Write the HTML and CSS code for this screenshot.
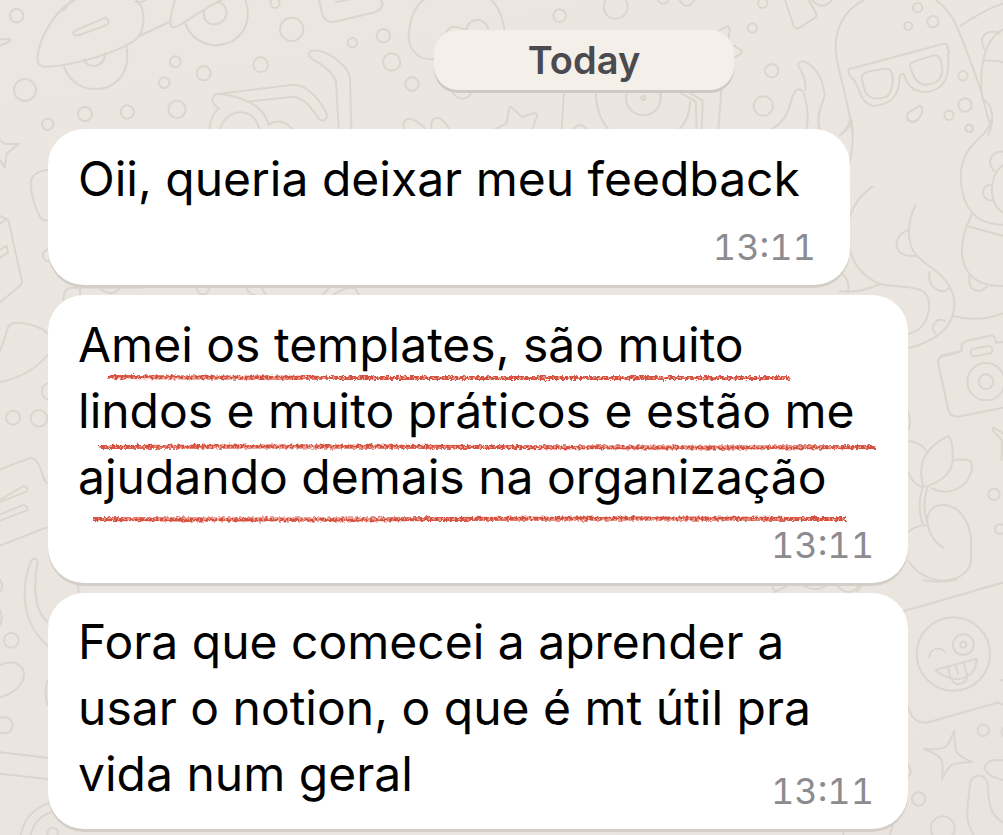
FILE: index.html
```html
<!DOCTYPE html>
<html lang="pt-BR">
<head>
<meta charset="utf-8">
<meta name="viewport" content="width=device-width, initial-scale=1">
<title>Chat</title>
<link rel="stylesheet" href="styles.css">
</head>
<body>
<svg class="wallpaper" width="1003" height="835" viewBox="0 0 1003 835" aria-hidden="true">
  <g transform="scale(.33333)">
    <circle cx="50" cy="47" r="20"/><circle cx="75" cy="270" r="33"/><circle cx="143" cy="373" r="17"/><circle cx="255" cy="342" r="21"/><circle cx="382" cy="336" r="20"/><circle cx="531" cy="328" r="26"/><circle cx="493" cy="248" r="16"/><circle cx="526" cy="185" r="16"/><circle cx="611" cy="220" r="21"/><circle cx="782" cy="194" r="22"/><circle cx="875" cy="88" r="35"/><circle cx="825" cy="10" r="14"/>
    <path d="M0 118L30 117Q34 121 24 127L0 137"/>
    <path d="M225 0C160 30 110 130 113 180Q113 202 145 200C230 195 340 160 400 125Q435 100 430 45Q428 20 410 0M190 33L215 0M418 108L508 66M405 5Q425 10 438 0"/>
    <path d="M224 92L310 56Q326 52 326 66Q325 74 310 79L238 105Q220 110 220 98Z"/>
    <path d="M378 133Q392 200 355 240Q320 275 260 265Q208 248 190 195M252 178Q260 198 284 198Q314 194 316 158"/>
    <path d="M525 0Q508 55 512 75Q518 90 545 72L630 18L665 0M556 72C580 130 640 150 695 125Q752 90 742 20L736 0M612 34Q608 65 635 73Q672 75 680 42Q680 12 655 6"/>
    <path d="M957 0L967 42Q975 68 1000 66L1120 38Q1148 30 1148 10L1142 0M1008 6L1060 -4"/>
    <path d="M628 388Q632 345 657 325Q635 312 637 298Q640 280 660 281L880 254C930 255 965 310 982 345Q980 365 960 360C940 335 920 295 880 290L750 304M660 281C730 290 790 315 806 374M660 388C680 320 765 320 778 388M806 374Q845 350 877 388"/>
    <path d="M945 182Q920 170 930 155Q950 145 990 165Q1045 200 1050 235L1054 388M945 182Q1000 215 1008 245L1016 388"/>
  </g>
  <g transform="translate(330 0) scale(.33333)">
    <circle cx="160" cy="107" r="20"/><circle cx="67" cy="128" r="14"/><circle cx="185" cy="186" r="26"/><circle cx="246" cy="252" r="20"/><circle cx="689" cy="47" r="19"/><circle cx="857" cy="20" r="36"/><circle cx="1000" cy="-5" r="16"/>
    <path d="M280 0C240 30 230 110 240 135Q260 182 315 177M485 0Q520 40 523 92M350 95Q360 75 385 82L408 90Q415 60 445 59Q472 65 476 92M365 270Q375 296 400 296Q425 290 425 270"/>
    <path d="M222 388Q215 356 240 356Q265 362 288 388M305 388Q298 352 325 354Q342 358 358 388M495 388L530 370L537 325Q541 317 548 325L575 350L612 340Q624 340 620 352L607 388"/>
    <path d="M702 270L695 388M728 388Q750 363 772 388M798 270Q795 340 835 388"/>
    <circle cx="940" cy="294" r="52"/><circle cx="940" cy="294" r="6"/>
  </g>
  <g transform="translate(660 0) scale(.33333)">
    <circle cx="308" cy="10" r="14"/><circle cx="277" cy="84" r="14"/><circle cx="335" cy="212" r="20"/><circle cx="310" cy="318" r="29"/><circle cx="773" cy="23" r="14"/><circle cx="819" cy="65" r="17"/><circle cx="745" cy="78" r="12"/><circle cx="909" cy="227" r="14"/><circle cx="915" cy="315" r="20"/><circle cx="867" cy="346" r="14"/><circle cx="927" cy="385" r="11"/>
    <path d="M58 0Q80 35 104 0M375 0L400 75Q406 90 420 83L465 53Q473 47 467 37L445 0M455 0Q488 35 516 0"/>
    <path d="M178 92L198 80Q210 77 209 92L205 118M222 137L243 150Q250 158 240 163L222 172M50 272L107 305L110 388M78 272L128 302L125 388M184 270L175 388M90 305Q90 355 58 388M0 300Q5 285 0 275"/>
    <path d="M335 388C400 350 385 290 410 270Q430 260 438 305Q447 345 440 388M436 270Q440 235 415 198Q415 182 434 185C475 205 490 245 494 285C490 310 465 345 480 392"/>
    <path d="M612 0C550 30 525 90 527 150C530 210 565 290 578 405M828 0C890 50 895 95 930 180C950 235 962 265 970 300M901 78Q960 35 1029 10M970 298Q1015 330 985 405M970 300Q980 345 990 370M1029 88C970 120 955 210 968 300M970 182Q1010 180 1029 187M972 145Q955 110 985 97Q1005 90 1020 102M545 402Q570 385 574 365"/>
    <path d="M565 212Q565 204 580 204L840 134Q865 125 863 145Q872 155 864 160C870 230 850 255 835 264C800 285 745 280 733 225Q725 215 718 232C720 300 680 315 640 318C600 310 600 265 582 240Q568 230 565 212Z"/>
    <path d="M630 214L675 206Q697 205 698 230Q700 275 680 290Q640 305 618 280Q608 255 605 235Q606 218 630 214ZM770 182L820 166Q842 163 844 190Q855 230 825 248Q785 265 765 235Q745 195 752 190ZM743 340L777 318Q787 315 787 335Q780 360 755 366Q735 355 743 340Z"/>
  </g>
  <g transform="translate(840 120) scale(.33333)">
    <circle cx="388" cy="25" r="11"/><path d="M202 0Q218 12 234 0M0 45Q25 25 30 0M35 0Q45 75 25 140M98 200C45 235 20 290 25 340Q23 450 120 492C190 508 265 485 268 555C265 600 245 635 203 642M120 492Q60 520 0 514M0 460Q28 470 25 510M226 256C200 310 200 370 228 405C265 445 325 460 342 535C350 600 315 655 205 685M205 330C155 345 155 415 225 407M270 455C255 500 310 530 326 504M316 602Q285 590 278 625L286 640M340 588Q415 608 489 580"/>
    <path d="M452 0C445 60 365 60 362 170C365 265 410 315 489 314M396 282L380 318L489 347M380 318C345 420 375 500 489 498M489 95C445 90 440 145 468 155M489 135C445 170 445 250 489 278M456 195C420 190 420 245 458 241M389 464C380 515 420 525 440 500M295 720Q300 705 320 707L365 694V675Q370 663 382 662L450 647Q467 645 467 668L489 666"/>
    <rect x="392" y="682" width="65" height="23" rx="10" transform="rotate(-10 424 693)"/>
  </g>
  <g transform="translate(840 350) scale(.33333)">
    <path d="M365 3L310 15Q292 22 295 42L325 180Q332 203 360 199L489 173"/>
    <circle cx="438" cy="95" r="56"/><circle cx="438" cy="95" r="22"/>
    <path d="M205 190Q215 210 207 237M205 274Q240 275 259 303M205 365Q215 400 248 412M250 411C235 355 240 300 325 258Q340 270 338 330C335 370 300 400 250 411ZM338 332Q365 325 392 333Q402 350 390 375C370 425 315 435 275 415M248 412Q230 465 247 520M263 410Q245 460 260 515M310 593Q260 560 262 500C275 460 320 455 355 482C400 525 395 580 392 640C370 705 260 715 205 633M257 526Q225 528 205 545M489 250L460 232Q455 235 460 242L485 270V330"/>
    <circle cx="462" cy="433" r="17"/><circle cx="480" cy="537" r="15"/>
    <path d="M407 720L489 698M55 720L72 698"/>
  </g>
  <g transform="translate(840 580) scale(.33333)">
    <path d="M190 94L489 8M250 0Q290 10 350 0M50 35L72 5M205 380Q215 430 260 428L472 368L489 374M489 300L484 302"/>
    <circle cx="340" cy="222" r="110"/><circle cx="370" cy="194" r="31"/><circle cx="370" cy="194" r="9"/>
    <path d="M268 230C270 205 300 200 314 214M285 270L410 236Q408 280 376 292Q330 308 285 270ZM326 260Q325 300 350 313Q380 312 382 286L370 247M347 258L354 280M343 452C345 520 340 520 395 546C330 550 330 550 306 597C310 540 315 530 252 507C325 510 320 505 343 452ZM205 555Q220 575 205 590M150 765L158 735M10 765V745"/>
    <circle cx="430" cy="451" r="17"/><circle cx="498" cy="456" r="14"/><circle cx="236" cy="657" r="20"/><circle cx="308" cy="745" r="36"/>
    <path d="M489 541C430 535 420 570 455 588L489 601M400 765C375 715 380 710 390 610Q400 580 430 590C455 610 435 640 455 690Q465 712 489 728"/>
  </g>
  <g transform="translate(0 120) scale(.33333)">
    <circle cx="39" cy="893" r="21"/><circle cx="117" cy="895" r="25"/>
    <path d="M0 60L14 72L58 71L20 100L14 143L0 120M142 150Q95 155 92 190Q95 245 120 290Q128 302 142 302M142 388Q125 395 130 412Q135 424 145 424M0 288L25 300L66 485Q65 495 55 502L0 547M0 310L16 300M0 390L20 377L24 398L0 412M0 695L25 620Q35 605 60 609Q120 615 142 640M0 787Q95 765 142 705M142 790Q120 800 128 825Q133 835 142 837M0 1048L90 1014Q115 1010 132 1080M190 540Q190 505 215 503H420Q435 503 440 495M240 500V522M300 506Q340 535 362 500"/>
  </g>
  <g transform="translate(0 475) scale(.33333)">
    <path d="M0 75L70 33Q85 34 81 49L0 81M0 118L70 90Q85 92 81 106L0 137M0 212L140 157M128 0L140 25M142 440C105 410 98 340 113 260Q105 245 95 255C70 310 50 430 142 512M0 570C50 550 72 575 72 600C70 630 40 655 0 667M0 728Q35 720 38 752Q35 780 0 774M0 832L142 848M0 896L142 912M142 618Q132 650 142 690M0 315Q15 335 0 350M0 405Q10 430 0 450M62 1080Q75 1010 145 985M92 1080Q105 1025 158 1010M235 325V350"/>
    <circle cx="34" cy="496" r="22"/><circle cx="158" cy="1074" r="16"/>
  </g>
  <path d="M196 285Q198 294 201 294H206Q210 290 211 285M246 285Q247 294 255 295M260 285L266 295M322 295L332 285M333 295Q345 286 355 288L359 295M771 584L775 592L790 584M800 584Q816 594 828 584M835 584Q850 600 860 584"/>
</svg>
<main class="chat">
  <header class="day"><time class="day-label">Today</time></header>
  <article class="bubble">
    <p class="message">Oii, queria deixar meu feedback</p>
    <time class="sent">13:11</time>
  </article>
  <article class="bubble">
    <p class="message">Amei os templates, são muito lindos e muito práticos e estão me ajudando demais na organização</p>
    <time class="sent">13:11</time>
    <svg class="marker" width="860" height="288" viewBox="0 0 860 288" aria-hidden="true">
      <filter id="crayon" filterUnits="userSpaceOnUse" x="0" y="0" width="860" height="288">
        <feTurbulence type="fractalNoise" baseFrequency=".35" numOctaves="2" seed="4" result="grain"/>
        <feDisplacementMap in="SourceGraphic" in2="grain" scale="5" xChannelSelector="R" yChannelSelector="G"/>
      </filter>
      <g filter="url(#crayon)">
        <path class="crayon" d="M60 82Q180 83 300 83T550 83T742 83M51 152Q250 151 450 152T828 152M45 224Q200 225 400 224T798 224"/>
        <path class="crayon-light" d="M60 83H742M51 152H828M45 224H798"/>
      </g>
    </svg>
  </article>
  <article class="bubble bubble-inline">
    <p class="message">Fora que comecei a aprender a usar o notion, o que é mt útil pra vida num geral <time class="sent">13:11</time></p>
  </article>
</main>
</body>
</html>
```
FILE: styles.css
```css
* {
  box-sizing: border-box;
}

body {
  position: relative;
  min-height: 100vh;
  margin: 0;
  overflow: hidden;
  background: linear-gradient(170deg, #ebe7e0 0%, #eae6df 65%, #ebe3de 100%);
  color: #000;
  font-family: Inter, "Liberation Sans", sans-serif;
}

.wallpaper {
  position: absolute;
  top: 0;
  left: 0;
  fill: none;
  stroke: #dad6cf;
  stroke-width: 6;
  stroke-linecap: round;
  stroke-linejoin: round;
}

.wallpaper > path {
  stroke-width: 2;
}

.chat {
  position: relative;
  display: flex;
  flex-direction: column;
  align-items: flex-start;
  gap: 10px;
  padding: 30px 48px 5px;
}

.day {
  display: flex;
  justify-content: center;
  align-self: stretch;
  margin: 0 0 29px 165px;
}

.day-label {
  width: 300px;
  border-radius: 24px;
  background: #f4efe8;
  box-shadow: 0 3px 0 #cdc9c3;
  color: #4a4a4f;
  font-size: 38px;
  font-weight: 600;
  line-height: 60px;
  text-align: center;
}

.bubble {
  position: relative;
  display: grid;
  row-gap: 13px;
  max-width: 860px;
  padding: 17px 34px 16px 30px;
  border-radius: 36px;
  background: #fff;
  box-shadow: 0 3px 0 #d3cfc8;
}

.message {
  margin: 0 16px 0 0;
  font-size: 48px;
  line-height: 66px;
}

.bubble + .bubble .message {
  margin-right: 0;
}

.sent {
  justify-self: end;
  color: #8c8c8f;
  font-size: 36px;
  font-variant-numeric: tabular-nums;
  line-height: 44px;
}

.bubble-inline {
  padding-top: 16px;
}

.bubble-inline .sent {
  float: right;
  margin-top: 28px;
}

.marker {
  position: absolute;
  top: 0;
  left: 0;
  fill: none;
}

.crayon {
  stroke: #d65243;
  stroke-width: 4;
}

.crayon-light {
  stroke: #ec9a8c;
  stroke-width: 2;
  stroke-dasharray: 2 3;
}
```
